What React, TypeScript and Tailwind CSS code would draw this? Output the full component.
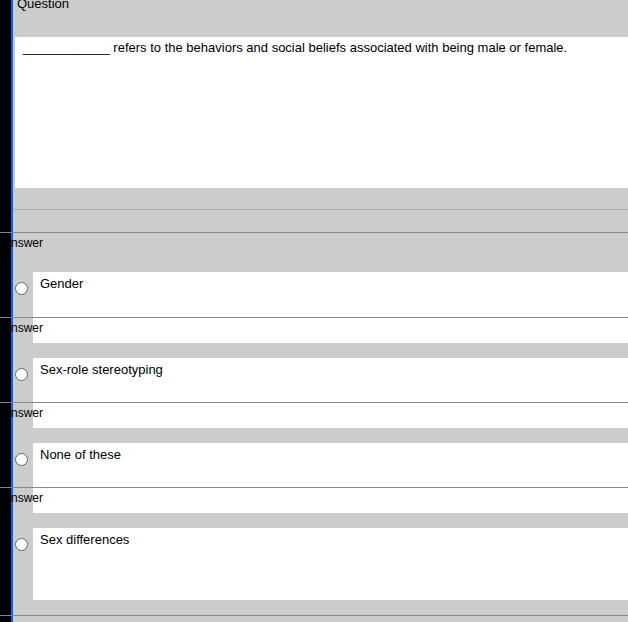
import React from "react";

function Section({ top, children }: { top?: boolean; children?: React.ReactNode }) {
  return (
    <div className={top ? "flex border-t border-[#888888]" : "flex"}>
      <div className="relative z-10 w-[11px] shrink-0 bg-black" />
      <div className="flow-root min-w-0 flex-1 border-l-2 border-[#0066ff]">{children}</div>
    </div>
  );
}

function Radio() {
  return (
    <div className="ml-[2px] mt-[10px] h-[13px] w-[13px] rounded-full border border-[#666666] bg-white" />
  );
}

function OptionRow({ label, h }: { label: string; h: string }) {
  return (
    <div className={"flex " + h}>
      <div className="w-[20px] shrink-0 bg-[#cccccc]">
        <Radio />
      </div>
      <div className="flex-1 bg-white pl-[7px] pt-[4px] text-[13px] leading-[15px]">{label}</div>
    </div>
  );
}

export default function App() {
  const answers = ["Sex-role stereotyping", "None of these", "Sex differences"];
  return (
    <div className="h-[622px] overflow-hidden bg-[#cccccc] font-['Liberation_Sans',Arial,sans-serif] text-[12px] leading-[14px] text-black">
      <Section>
        <div className="flow-root h-[37px] pl-[4px] text-[13px] leading-[15px]">
          <div className="-mt-[4px]">Question</div>
        </div>
        <div className="ml-[2px] h-[151px] bg-white pl-[8px] pt-[3px] text-[13px] leading-[15px]">
          ____________ refers to the behaviors and social beliefs associated with being male or female.
        </div>
        <div className="h-[21px]" />
        <div className="h-[23px] border-t border-[#aaaaaa]" />
      </Section>

      <Section top>
        <div className="h-[39px] pt-[3px]">
          <div className="-ml-[10px]">Answer</div>
        </div>
        <OptionRow label="Gender" h="h-[45px]" />
      </Section>

      {answers.map((a, i) => (
        <Section top key={a}>
          <div className="h-[25px] bg-[linear-gradient(to_right,#cccccc_20px,#ffffff_20px)] pt-[3px]">
            <div className="-ml-[10px]">Answer</div>
          </div>
          <div className="h-[15px]" />
          <OptionRow label={a} h={i === 2 ? "h-[72px]" : "h-[44px]"} />
          {i === 2 ? <div className="h-[15px]" /> : null}
        </Section>
      ))}

      <Section top>
        <div className="h-[20px]" />
      </Section>
    </div>
  );
}
